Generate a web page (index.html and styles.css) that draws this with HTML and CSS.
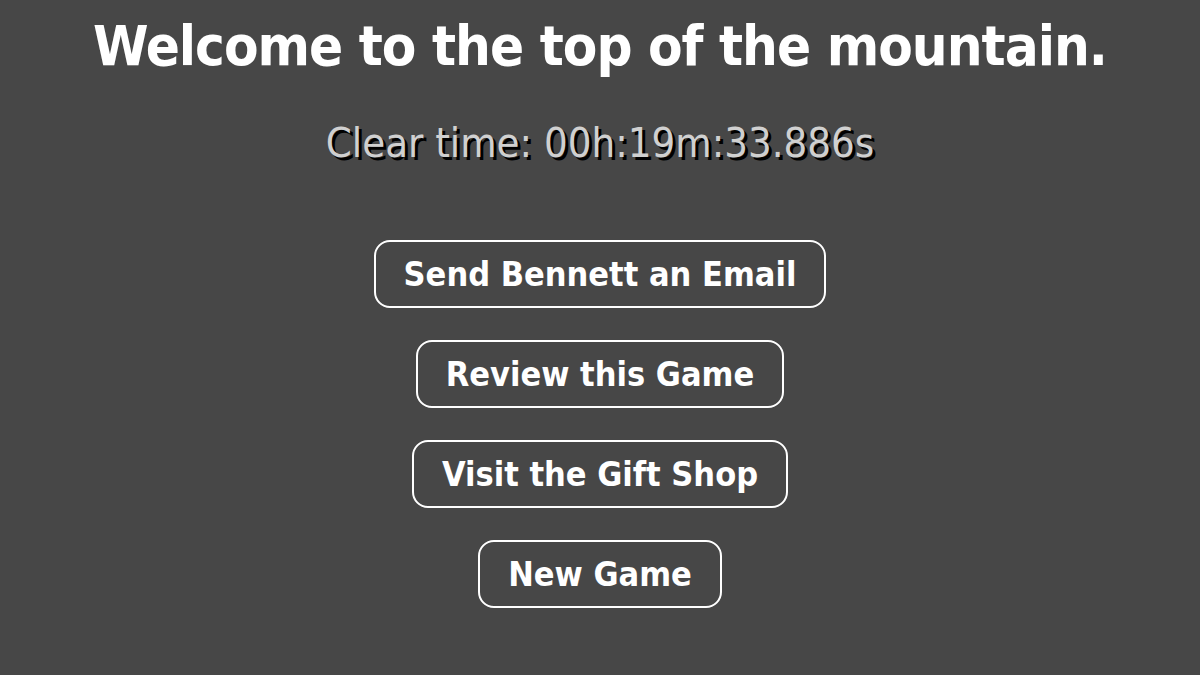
FILE: index.html
```html
<!DOCTYPE html>
<html lang="en">
<head>
  <meta charset="UTF-8">
  <meta name="viewport" content="width=device-width, initial-scale=1.0">
  <title>The End</title>
  <link rel="stylesheet" href="styles.css">
</head>
<body>
  <div class="container">
    <h1 class="title">Welcome to the top of the mountain.</h1>
    <p class="clear-time">Clear time: 00h:19m:33.886s</p>

    <!-- End screen menu -->
    <div class="menu">
      <button class="menu-button">Send Bennett an Email</button>
      <button class="menu-button">Review this Game</button>
      <button class="menu-button">Visit the Gift Shop</button>
      <button class="menu-button">New Game</button>
    </div>
  </div>
</body>
</html>
```

FILE: styles.css
```css
body {
  margin: 0;
  padding: 0;
  background-color: #474747;
  font-family: "DejaVu Sans Condensed", "DejaVu Sans", sans-serif;
}

.container {
  display: flex;
  flex-direction: column;
  align-items: center;
  height: 675px;
  overflow: hidden;
}

.title {
  margin: 12px 0 0;
  font-size: 56px;
  font-weight: bold;
  line-height: 68px;
  letter-spacing: -1px;
  color: #ffffff;
}

.clear-time {
  margin: 38px 0 0;
  font-size: 41.5px;
  line-height: 50px;
  color: #d0d0d0;
  text-shadow: 3px 3px 0 #000000;
}

.menu {
  display: flex;
  flex-direction: column;
  align-items: center;
  gap: 32px;
  margin-top: 72px;
}

.menu-button {
  padding: 0 28px;
  height: 68px;
  font-family: inherit;
  font-size: 34px;
  font-weight: bold;
  color: #ffffff;
  background: transparent;
  border: 2px solid #ffffff;
  border-radius: 16px;
}
```
